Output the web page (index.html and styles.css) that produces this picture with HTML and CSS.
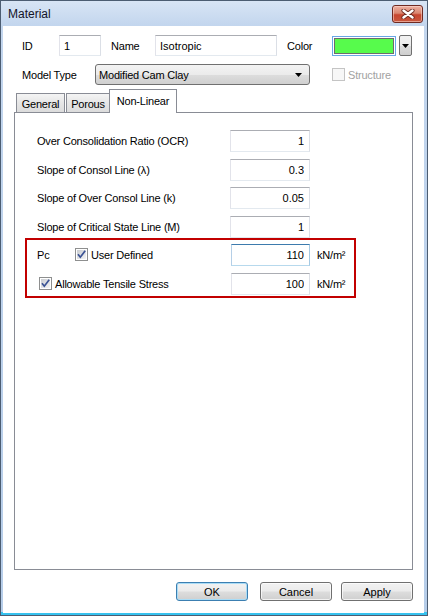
FILE: index.html
```html
<!DOCTYPE html>
<html lang="en">
<head>
<meta charset="utf-8">
<title>Material</title>
<link rel="stylesheet" href="styles.css">
</head>
<body>
<div class="window">
  <div class="titlebar">
    <span class="title">Material</span>
    <button class="close" aria-label="Close">
      <svg width="14" height="10" viewBox="0 0 14 10">
        <path d="M2.5 1.5 L11.5 8.5 M11.5 1.5 L2.5 8.5" stroke="#6e2a20" stroke-width="4.2" stroke-linecap="round"/>
        <path d="M2.5 1.5 L11.5 8.5 M11.5 1.5 L2.5 8.5" stroke="#ffffff" stroke-width="2.4" stroke-linecap="round"/>
      </svg>
    </button>
  </div>

  <div class="client">
    <div class="toprow">
      <span class="lbl lbl-id">ID</span>
      <input class="field w-id" type="text" value="1" readonly>
      <span class="lbl lbl-name">Name</span>
      <input class="field w-name" type="text" value="Isotropic" readonly>
      <span class="lbl lbl-color">Color</span>
      <div class="swatch"><div class="swatch-fill"></div></div>
      <button class="dropbtn" aria-label="Choose color">
        <svg width="7" height="4" viewBox="0 0 7 4"><polygon points="0,0 7,0 3.5,4" fill="#000"/></svg>
      </button>
    </div>

    <div class="modelrow">
      <span class="lbl lbl-model">Model Type</span>
      <div class="combo">
        <span>Modified Cam Clay</span>
        <svg width="7" height="4" viewBox="0 0 7 4"><polygon points="0,0 7,0 3.5,4" fill="#000"/></svg>
      </div>
      <label class="check disabled">
        <svg class="box" width="13" height="13" viewBox="0 0 13 13">
          <rect x="0.5" y="0.5" width="12" height="12" fill="#f7f7f7" stroke="#c4c4c4"/>
        </svg>
        Structure
      </label>
    </div>

    <div class="tabs">
      <div class="tab t-general">General</div>
      <div class="tab t-porous">Porous</div>
      <div class="tab t-nonlinear active">Non-Linear</div>
    </div>

    <div class="panel">
      <div class="param">
        <span class="plabel">Over Consolidation Ratio (OCR)</span>
        <input class="field num" type="text" value="1" readonly>
      </div>
      <div class="param">
        <span class="plabel">Slope of Consol Line (λ)</span>
        <input class="field num" type="text" value="0.3" readonly>
      </div>
      <div class="param">
        <span class="plabel">Slope of Over Consol Line (k)</span>
        <input class="field num" type="text" value="0.05" readonly>
      </div>
      <div class="param">
        <span class="plabel">Slope of Critical State Line (M)</span>
        <input class="field num" type="text" value="1" readonly>
      </div>

      <div class="pcbox">
        <div class="pcrow">
          <div class="pcleft">
            <span class="pc-name">Pc</span>
            <label class="check">
              <svg class="box" width="13" height="13" viewBox="0 0 13 13">
                <defs>
                  <linearGradient id="cbg" x1="0" y1="0" x2="1" y2="1">
                    <stop offset="0" stop-color="#c9ccd1"/>
                    <stop offset="1" stop-color="#f4f4f4"/>
                  </linearGradient>
                </defs>
                <rect x="0.5" y="0.5" width="12" height="12" fill="#fff" stroke="#8e8f8f"/>
                <rect x="2" y="2" width="9" height="9" fill="url(#cbg)"/>
                <path d="M3 6.3 L5.3 9.2 L10.2 2.8" fill="none" stroke="#3a5294" stroke-width="1.7"/>
              </svg>
              User Defined
            </label>
          </div>
          <input class="field num focus" type="text" value="110" readonly>
          <span class="unit">kN/m²</span>
        </div>
        <div class="pcrow">
          <div class="pcleft">
            <label class="check check-indent">
              <svg class="box" width="13" height="13" viewBox="0 0 13 13">
                <rect x="0.5" y="0.5" width="12" height="12" fill="#fff" stroke="#8e8f8f"/>
                <rect x="2" y="2" width="9" height="9" fill="url(#cbg)"/>
                <path d="M3 6.3 L5.3 9.2 L10.2 2.8" fill="none" stroke="#3a5294" stroke-width="1.7"/>
              </svg>
              Allowable Tensile Stress
            </label>
          </div>
          <input class="field num" type="text" value="100" readonly>
          <span class="unit">kN/m²</span>
        </div>
      </div>
    </div>

    <div class="buttons">
      <button class="btn default">OK</button>
      <button class="btn btn-cancel">Cancel</button>
      <button class="btn">Apply</button>
    </div>
  </div>
</div>
</body>
</html>
```

FILE: styles.css
```css
/* Material dialog, Vista basic look */
html, body {
  margin: 0;
  padding: 0;
}

body {
  font-family: "Liberation Sans", Arial, sans-serif;
  font-size: 11px;
  letter-spacing: -0.2px;
  color: #000;
  background: #fff;
}

.window {
  width: 428px;
  height: 616px;
  box-sizing: border-box;
  border: 1px solid #4c5d72;
  padding: 0 3px 2px 2px;
  background:
    linear-gradient(to top, #36c2ef 3px, transparent 3px),
    linear-gradient(#d8e5f5, #c3d6ee 24px, #b6cde9);
  display: flex;
  flex-direction: column;
}

/* ---- title bar ---- */
.titlebar {
  height: 25px;
  flex: none;
  display: flex;
  align-items: center;
  justify-content: space-between;
  padding-left: 5px;
}

.title {
  font-size: 12px;
  letter-spacing: 0;
  color: #141428;
  margin-top: 1px;
}

.close {
  width: 31px;
  height: 18px;
  margin: 1px 1px 0 0;
  padding: 0;
  border: 1px solid #6f2a22;
  border-radius: 3px;
  background: linear-gradient(#eeb1a3 0%, #d9856f 45%, #c7452f 55%, #c9583f 100%);
  box-shadow: inset 0 0 0 1px rgba(255, 220, 210, 0.55);
  display: flex;
  align-items: center;
  justify-content: center;
}

/* ---- client area ---- */
.client {
  flex: 1;
  background: #fff;
  display: flex;
  flex-direction: column;
}

.lbl {
  flex: none;
}

.field {
  box-sizing: border-box;
  height: 21px;
  margin: 0;
  padding: 0 4px;
  border: 1px solid;
  border-color: #abadb3 #dbdfe6 #e3e9ef #e2e3ea;
  background: #fff;
  font: inherit;
  color: #000;
  outline: none;
  flex: none;
}

.toprow {
  margin-top: 9px;
  height: 21px;
  display: flex;
  align-items: center;
}

.lbl-id { margin-left: 19px; width: 37px; }
.w-id { width: 42px; }
.lbl-name { margin-left: 10px; width: 44px; }
.w-name { width: 122px; }
.lbl-color { margin-left: 10px; width: 45px; }

.swatch {
  box-sizing: border-box;
  width: 64px;
  height: 20px;
  border: 1px solid #68a7e6;
  padding: 1px;
  flex: none;
}

.swatch-fill {
  box-sizing: border-box;
  height: 100%;
  border: 1px solid #6c6c6c;
  background: #57fb4c;
}

.dropbtn {
  box-sizing: border-box;
  width: 13px;
  height: 21px;
  margin-left: 3px;
  padding: 0;
  border: 1px solid #707070;
  border-radius: 2px;
  background: linear-gradient(#f2f2f2 0%, #ebebeb 50%, #dddddd 50%, #cfcfcf 100%);
  display: flex;
  align-items: center;
  justify-content: center;
}

.modelrow {
  margin-top: 8px;
  height: 21px;
  display: flex;
  align-items: center;
}

.lbl-model {
  margin-left: 19px;
  width: 73px;
}

.combo {
  box-sizing: border-box;
  width: 215px;
  height: 21px;
  border: 1px solid #707070;
  border-radius: 3px;
  background: linear-gradient(#f3f3f3 0%, #ebebeb 50%, #dddddd 50%, #d0d0d0 100%);
  display: flex;
  align-items: center;
  justify-content: space-between;
  padding: 0 7px 0 3px;
  flex: none;
}

.check {
  display: flex;
  align-items: center;
  gap: 3px;
}

.check .box {
  flex: none;
}

.modelrow .check {
  margin-left: 22px;
}

.check.disabled {
  color: #a2a2a2;
}

/* ---- tabs ---- */
.tabs {
  margin: 4px 0 -1px 13px;
  height: 24px;
  display: flex;
  align-items: flex-end;
  position: relative;
  z-index: 1;
  flex: none;
}

.tab {
  box-sizing: border-box;
  height: 19px;
  margin-bottom: 1px;
  border: 1px solid #898c95;
  border-bottom: none;
  background: linear-gradient(#f4f4f4, #e6e6e6 50%, #dcdcdc);
  display: flex;
  align-items: center;
  justify-content: center;
  padding-top: 2px;
}

.t-general { width: 49px; }
.t-porous { width: 44px; margin-left: 1px; }

.tab.active {
  width: 68px;
  height: 24px;
  margin-bottom: 0;
  margin-left: -1px;
  background: #fff;
  padding-top: 0;
  padding-bottom: 2px;
}

/* ---- tab page ---- */
.panel {
  box-sizing: border-box;
  margin-left: 11px;
  width: 399px;
  height: 458px;
  border: 1px solid #898c95;
  background: #fff;
  padding-top: 17px;
  flex: none;
}

.param {
  display: flex;
  align-items: center;
  height: 22px;
  margin-bottom: 6.5px;
  padding-left: 22px;
}

.param:nth-child(4) {
  margin-bottom: 0;
}

.plabel {
  width: 193px;
  flex: none;
}

.param .field {
  width: 80px;
  height: 22px;
}

.num {
  text-align: right;
  padding-right: 5px;
}

.field.focus {
  border-color: #3d7bad #a4c9e3 #b7d9ed #b5cfe7;
}

.pcbox {
  box-sizing: border-box;
  margin-left: 10px;
  width: 331px;
  border: 2px solid #c20000;
  padding: 4px 0 1px;
}

.pcrow {
  display: flex;
  align-items: center;
  height: 22px;
}

.pcrow + .pcrow {
  margin-top: 7px;
}

.pcleft {
  width: 204px;
  flex: none;
  display: flex;
  align-items: center;
}

.pc-name {
  padding-left: 10px;
  width: 38px;
}

.check-indent {
  margin-left: 12px;
}

.pcrow .field {
  width: 79px;
  height: 22px;
}

.unit {
  margin-left: 7px;
}

/* ---- dialog buttons ---- */
.buttons {
  margin-top: 12px;
  padding-right: 11px;
  display: flex;
  justify-content: flex-end;
}

.btn {
  box-sizing: border-box;
  width: 72px;
  height: 19px;
  padding: 0;
  border: 1px solid #707070;
  border-radius: 3px;
  background: linear-gradient(#f2f2f2 0%, #ebebeb 48%, #dddddd 52%, #cfcfcf 100%);
  box-shadow: inset 0 0 0 1px rgba(255, 255, 255, 0.7);
  font: inherit;
  color: #000;
}

.btn + .btn {
  margin-left: 9px;
}

.btn-cancel {
  margin-left: 12px !important;
}

.btn.default {
  border-color: #3c7fb1;
  box-shadow: inset 0 0 0 1px #a9dcf6;
}
```
